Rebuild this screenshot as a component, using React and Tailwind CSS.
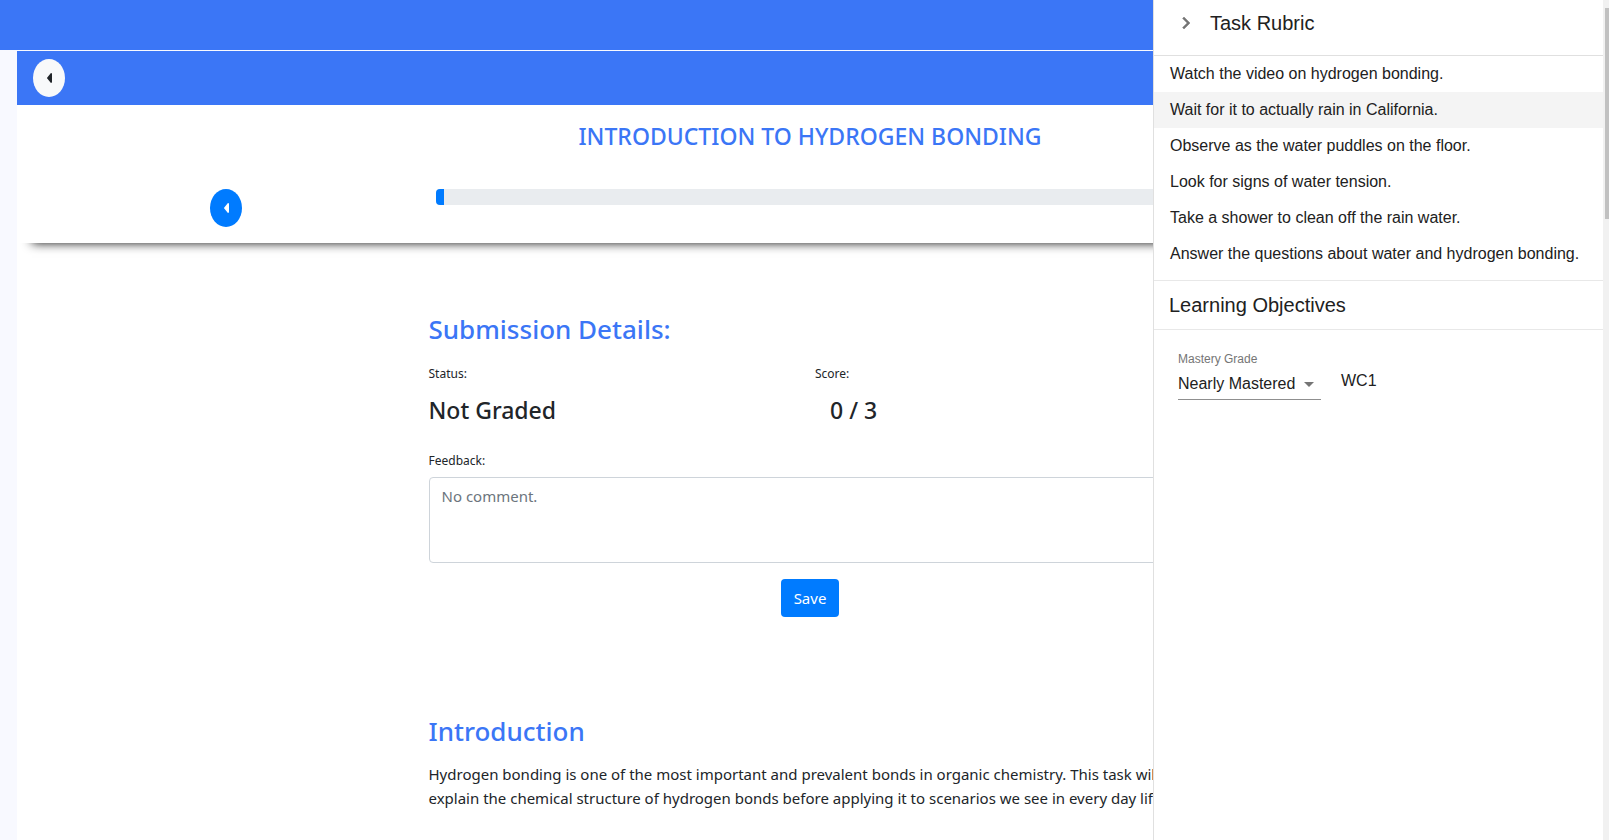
import React from "react";

const RUBRIC = [
  "Watch the video on hydrogen bonding.",
  "Wait for it to actually rain in California.",
  "Observe as the water puddles on the floor.",
  "Look for signs of water tension.",
  "Take a shower to clean off the rain water.",
  "Answer the questions about water and hydrogen bonding.",
];

function CaretLeft() {
  return (
    <svg viewBox="0 0 5 10" className="h-[10px] w-[5px]" fill="currentColor" aria-hidden="true">
      <path d="M5 .9v8.2c0 .7-.8 1-1.3.6L.3 5.6a.8.8 0 0 1 0-1.2L3.7.3C4.200-.1 5 .2 5 .9z" />
    </svg>
  );
}

function TopBars() {
  return (
    <div className="flex h-[54px] items-center bg-[#3b76f6] px-4">
      <button
        type="button"
        aria-label="Back"
        className="flex h-[38px] w-8 items-center justify-center rounded-[50%] bg-[#f8f9fa] pl-px text-[#212529]"
      >
        <CaretLeft />
      </button>
    </div>
  );
}

function TaskHeader() {
  return (
    <section className="h-[138px] bg-white shadow-[0_15px_10px_-15px_#111]">
      <h1 className="pt-[17px] text-center text-[23px] leading-7 font-medium text-[#3b76f6]">
        INTRODUCTION TO HYDROGEN BONDING
      </h1>
      <div className="mt-[39px] flex">
        <div className="flex flex-1 justify-center">
          <button
            type="button"
            aria-label="Previous page"
            className="flex h-[38px] w-8 items-center justify-center rounded-[50%] bg-[#007bff] pl-px text-white"
          >
            <CaretLeft />
          </button>
        </div>
        <div
          role="progressbar"
          aria-label="Task progress"
          aria-valuenow={1}
          className="h-4 w-[47.2%] overflow-hidden rounded bg-[#e9ecef]"
        >
          <div className="h-full w-2 bg-[#007bff]" />
        </div>
        <div className="flex-1" />
      </div>
    </section>
  );
}

function Submission() {
  return (
    <section className="mt-[68px]">
      <h2 className="text-[26px] leading-9 font-medium text-[#3b76f6]">Submission Details:</h2>
      <div className="mt-[17px] grid grid-cols-2 gap-x-[10px]">
        <div>
          <p className="text-xs leading-5">Status:</p>
          <p className="mt-3 text-[23px] leading-7 font-medium">Not Graded</p>
        </div>
        <div>
          <p className="text-xs leading-5">Score:</p>
          <p className="mt-3 pl-[15px] text-[23px] leading-7 font-medium">0 / 3</p>
        </div>
      </div>
      <label htmlFor="feedback" className="mt-[27px] block text-xs leading-5">
        Feedback:
      </label>
      <textarea
        id="feedback"
        placeholder="No comment."
        className="mt-[6px] block h-[86px] w-full resize-none rounded border border-[#ced4da] px-3 py-[6px] text-[15px] leading-6 placeholder:text-[#6c757d]"
      />
      <div className="mt-4 flex justify-center">
        <button
          type="button"
          className="rounded bg-[#007bff] px-[13px] py-[7px] text-[15px] leading-6 text-white"
        >
          Save
        </button>
      </div>
    </section>
  );
}

function RubricPanel() {
  return (
    <aside className="absolute inset-y-0 right-0 flex w-[456px] border-l border-[#e0e0e0] bg-white font-['Liberation_Sans',sans-serif] text-base text-[#212121]">
      <div className="flex-1">
        <div className="flex h-14 items-start border-b border-[#e0e0e0] pl-5">
          <button type="button" aria-label="Close rubric" className="mt-[11px] text-[#757575]">
            <svg
              viewBox="0 0 24 24"
              className="size-6"
              fill="currentColor"
              stroke="currentColor"
              strokeWidth=".5"
              aria-hidden="true"
            >
              <path d="M10 6 8.590 7.410 13.170 12l-4.580 4.590L10 18l6-6z" />
            </svg>
          </button>
          <h2 className="ml-3 pt-[7px] text-xl leading-8">Task Rubric</h2>
        </div>
        <ul className="pb-2">
          {RUBRIC.map((text, i) => (
            <li
              key={text}
              className={`py-[6px] pl-4 leading-6 whitespace-nowrap ${i === 1 ? "bg-[#f4f4f4]" : ""}`}
            >
              {text}
            </li>
          ))}
        </ul>
        <h2 className="border-y border-[#e8e8e8] px-[15px] py-2 text-xl leading-8">
          Learning Objectives
        </h2>
        <div className="flex gap-5 pt-[19px] pl-6">
          <div className="w-[143px]">
            <label htmlFor="mastery" className="block text-xs leading-5 text-[#757575]">
              Mastery Grade
            </label>
            <div className="relative">
              <select
                id="mastery"
                defaultValue="Nearly Mastered"
                className="h-[31px] w-full appearance-none border-b border-[#8f8f8f] bg-transparent pr-6 pb-px leading-6"
              >
                <option>Mastered</option>
                <option>Nearly Mastered</option>
                <option>Not Mastered</option>
              </select>
              <svg
                viewBox="0 0 24 24"
                className="pointer-events-none absolute top-[3px] right-0 size-6 text-[#757575]"
                fill="currentColor"
                aria-hidden="true"
              >
                <path d="M7 10l5 5 5-5z" />
              </svg>
            </div>
          </div>
          <p className="pt-5 leading-6">WC1</p>
        </div>
      </div>
      <div className="w-[6px] bg-[#f1f1f1] pt-2 pl-[2px]" aria-hidden="true">
        <div className="h-[211px] bg-[#c1c1c1]" />
      </div>
    </aside>
  );
}

export default function App() {
  return (
    <div className="relative min-h-screen overflow-hidden bg-[#f8f9ff] font-['Noto_Sans',sans-serif] text-[15px] text-[#212529]">
      <div className="h-[50px] bg-[#3b76f6]" />
      <div className="mt-px mr-[6px] ml-[17px]">
        <TopBars />
        <main className="min-h-[735px] bg-white">
          <TaskHeader />
          <div className="mx-auto w-1/2 px-[15px]">
            <Submission />
            <section className="mt-24">
              <h2 className="text-[26px] leading-9 font-medium text-[#3b76f6]">Introduction</h2>
              <p className="mt-[13px] leading-6">
                Hydrogen bonding is one of the most important and prevalent bonds in organic
                chemistry. This task will explain the chemical structure of hydrogen bonds before
                applying it to scenarios we see in every day life.
              </p>
            </section>
          </div>
        </main>
      </div>
      <RubricPanel />
    </div>
  );
}
